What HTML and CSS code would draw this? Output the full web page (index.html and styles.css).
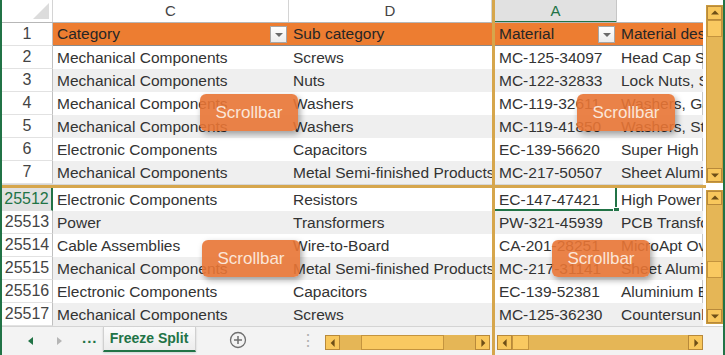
FILE: index.html
```html
<!DOCTYPE html>
<html lang="en">
<head>
    <meta charset="UTF-8">
    <title>Freeze Split</title>
    <link rel="stylesheet" href="styles.css">
</head>
<body>

    <div class="sheet">
        <!-- Top left pane: row headers, C and D -->
        <div class="pane pane-tl">
            <div class="colhead cols-l">
                <div class="corner"><span class="corner-tri"></span></div>
                <div class="hd">C</div>
                <div class="hd">D</div>
            </div>
            <div class="row cols-l">
                <div class="rn">1</div>
                <div class="cell th">Category<span class="filter"></span></div>
                <div class="cell th">Sub category</div>
            </div>
            <div class="row cols-l"><div class="rn">2</div><div class="cell">Mechanical Components</div><div class="cell">Screws</div></div>
            <div class="row cols-l alt"><div class="rn">3</div><div class="cell">Mechanical Components</div><div class="cell">Nuts</div></div>
            <div class="row cols-l"><div class="rn">4</div><div class="cell">Mechanical Components</div><div class="cell">Washers</div></div>
            <div class="row cols-l alt"><div class="rn">5</div><div class="cell">Mechanical Components</div><div class="cell">Washers</div></div>
            <div class="row cols-l"><div class="rn">6</div><div class="cell">Electronic Components</div><div class="cell">Capacitors</div></div>
            <div class="row cols-l alt"><div class="rn">7</div><div class="cell">Mechanical Components</div><div class="cell">Metal Semi-finished Products</div></div>
        </div>

        <!-- Top right pane: A and B -->
        <div class="pane pane-tr">
            <div class="colhead cols-r">
                <div class="hd hd-active">A</div>
                <div class="hd hd-blank"></div>
            </div>
            <div class="row cols-r edge">
                <div class="cell th">Material<span class="filter"></span></div>
                <div class="cell th">Material description</div>
            </div>
            <div class="row cols-r edge"><div class="cell">MC-125-34097</div><div class="cell">Head Cap Screws</div></div>
            <div class="row cols-r edge alt"><div class="cell">MC-122-32833</div><div class="cell">Lock Nuts, Steel</div></div>
            <div class="row cols-r edge"><div class="cell">MC-119-32611</div><div class="cell">Washers, Galvanized</div></div>
            <div class="row cols-r edge alt"><div class="cell">MC-119-41850</div><div class="cell">Washers, Steel</div></div>
            <div class="row cols-r edge"><div class="cell">EC-139-56620</div><div class="cell">Super High Capacity</div></div>
            <div class="row cols-r edge alt"><div class="cell">MC-217-50507</div><div class="cell">Sheet Aluminium</div></div>
        </div>

        <div class="vscroll vscroll-top">
            <div class="sb-btn"><span class="arr up"></span></div>
            <div class="sb-track"><div class="sb-thumb"></div></div>
            <div class="sb-btn"><span class="arr down"></span></div>
        </div>

        <div class="split-h"></div>
        <div class="split-v"></div>

        <!-- Bottom left pane -->
        <div class="pane pane-bl">
            <div class="row cols-l"><div class="rn rn-active">25512</div><div class="cell">Electronic Components</div><div class="cell">Resistors</div></div>
            <div class="row cols-l alt"><div class="rn">25513</div><div class="cell">Power</div><div class="cell">Transformers</div></div>
            <div class="row cols-l"><div class="rn">25514</div><div class="cell">Cable Assemblies</div><div class="cell">Wire-to-Board</div></div>
            <div class="row cols-l alt"><div class="rn">25515</div><div class="cell">Mechanical Components</div><div class="cell">Metal Semi-finished Products</div></div>
            <div class="row cols-l"><div class="rn">25516</div><div class="cell">Electronic Components</div><div class="cell">Capacitors</div></div>
            <div class="row cols-l alt"><div class="rn">25517</div><div class="cell">Mechanical Components</div><div class="cell">Screws</div></div>
        </div>

        <!-- Bottom right pane -->
        <div class="pane pane-br">
            <div class="row cols-r edge"><div class="cell cell-active">EC-147-47421</div><div class="cell">High Power Resistors</div></div>
            <div class="row cols-r edge alt"><div class="cell">PW-321-45939</div><div class="cell">PCB Transformers</div></div>
            <div class="row cols-r edge"><div class="cell">CA-201-28251</div><div class="cell">MicroApt Overmolded</div></div>
            <div class="row cols-r edge alt"><div class="cell">MC-217-31141</div><div class="cell">Sheet Aluminium</div></div>
            <div class="row cols-r edge"><div class="cell">EC-139-52381</div><div class="cell">Aluminium Electrolytic</div></div>
            <div class="row cols-r edge alt"><div class="cell">MC-125-36230</div><div class="cell">Countersunk Screws</div></div>
        </div>

        <div class="vscroll vscroll-bottom">
            <div class="sb-btn"><span class="arr up"></span></div>
            <div class="sb-track"><div class="sb-thumb"></div></div>
            <div class="sb-btn"><span class="arr down"></span></div>
        </div>

        <!-- Sheet tabs + horizontal scrollbars -->
        <div class="tabbar tabbar-l">
            <span class="nav nav-prev"></span>
            <span class="nav nav-next"></span>
            <span class="nav-more">...</span>
            <div class="tab">Freeze Split</div>
            <span class="add-sheet">
                <svg width="18" height="18" viewBox="0 0 18 18">
                    <circle cx="9" cy="9" r="7.5" fill="none" stroke="#6f6f6f" stroke-width="1.3"/>
                    <path d="M9 5v8M5 9h8" stroke="#6f6f6f" stroke-width="1.5"/>
                </svg>
            </span>
            <span class="grip">&#8942;</span>
            <div class="hscroll hscroll-l">
                <div class="sb-btn"><span class="arr left"></span></div>
                <div class="sb-track"><div class="sb-thumb"></div></div>
                <div class="sb-btn"><span class="arr right"></span></div>
            </div>
        </div>
        <div class="tabbar tabbar-r">
            <div class="hscroll hscroll-r">
                <div class="sb-btn"><span class="arr left"></span></div>
                <div class="sb-track"><div class="sb-thumb"></div></div>
                <div class="sb-btn"><span class="arr right"></span></div>
            </div>
        </div>
        <div class="tabbar tabbar-end"></div>
    </div>

    <!-- Callouts over the scrollbars -->
    <div class="callout callout-tl">Scrollbar</div>
    <div class="callout callout-tr">Scrollbar</div>
    <div class="callout callout-bl">Scrollbar</div>
    <div class="callout callout-br">Scrollbar</div>

</body>
</html>
```

FILE: styles.css
```css
/* Base */
body {
    margin: 0;
    width: 725px;
    height: 355px;
    overflow: hidden;
    position: relative;
    background: #ffffff;
    font-family: "Liberation Sans", Arial, sans-serif;
    color: #333333;
}

/* --- Sheet grid: panes, split bars, scrollbars --- */
.sheet {
    display: grid;
    grid-template-columns: 490px 3px 208px 3px 17px;
    grid-template-rows: 185px 3px 138px 29px;
    height: 355px;
    box-sizing: border-box;
    border-left: 2px solid #217346;
    border-right: 2px solid #217346;
}

.pane {
    overflow: hidden;
}
.pane-tl { grid-column: 1; grid-row: 1; border-bottom: 1px solid #d6d6d6; box-sizing: border-box; }
.pane-tr { grid-column: 3; grid-row: 1; border-bottom: 1px solid #d6d6d6; box-sizing: border-box; }
.pane-bl { grid-column: 1; grid-row: 3; }
.pane-br { grid-column: 3; grid-row: 3; }

.split-h {
    grid-column: 1 / 5;
    grid-row: 2;
    background: #d6a64c;
}
.split-v {
    grid-column: 2;
    grid-row: 1 / 5;
    background: #d6a64c;
}

/* Column layouts */
.cols-l {
    display: grid;
    grid-template-columns: 51px 236px 203px;
}
.cols-r {
    display: grid;
    grid-template-columns: 122px 86px;
}

/* Column letter header */
.colhead {
    height: 23px;
    box-sizing: border-box;
    border-bottom: 1px solid #b7b7b7;
    background: #ffffff;
}
.corner {
    position: relative;
    border-right: 1px solid #d4d4d4;
}
.corner-tri {
    position: absolute;
    right: 3px;
    bottom: 3px;
    width: 0;
    height: 0;
    border-left: 16px solid transparent;
    border-bottom: 16px solid #dcdcdc;
}
.hd {
    text-align: center;
    font-size: 15px;
    line-height: 22px;
    color: #444444;
    border-right: 1px solid #d4d4d4;
}
.hd-active {
    background: #e1e1e1;
    color: #217346;
    border-bottom: 2px solid #217346;
    border-right-color: #c6c6c6;
    line-height: 21px;
}
.hd-blank {
    border-right: none;
}

/* Data rows */
.row {
    height: 23px;
    box-sizing: border-box;
}
.edge {
    width: 208px;
    border-right: 1px solid #c6c6c6;
}
.rn {
    background: #ffffff;
    border-right: 1px solid #c0c0c0;
    border-bottom: 1px solid #e2e2e2;
    text-align: center;
    font-size: 16px;
    line-height: 22px;
    color: #444444;
}
.rn-active {
    background: #e1e1e1;
    color: #217346;
    border-right: 2px solid #217346;
}
.cell {
    position: relative;
    padding-left: 4px;
    font-size: 15.5px;
    line-height: 23px;
    white-space: nowrap;
    overflow: hidden;
    color: #333333;
}
.alt .cell {
    background: #efefef;
}
.th,
.alt .th {
    background: #ed7d31;
    color: #262626;
    border-top: 1px solid #b7b7b7;
    border-bottom: 1px solid #8a8a8a;
    line-height: 21px;
    margin-top: -1px;
}

.filter {
    position: absolute;
    right: 2px;
    top: 3px;
    width: 15px;
    height: 15px;
    background: linear-gradient(#ffffff, #ececec);
    border: 1px solid #a6a6a6;
}
.filter::after {
    content: "";
    position: absolute;
    left: 4px;
    top: 6px;
    border-left: 4px solid transparent;
    border-right: 4px solid transparent;
    border-top: 4px solid #6a6a6a;
}

/* Active cell A25512 */
.cell-active {
    overflow: visible;
    box-shadow: inset -2px -2px 0 #217346;
}
.cell-active::after {
    content: "";
    position: absolute;
    right: -3px;
    bottom: -3px;
    width: 5px;
    height: 5px;
    background: #217346;
    border: 1px solid #ffffff;
}

/* --- Scrollbars --- */
.vscroll {
    grid-column: 5;
    display: flex;
    flex-direction: column;
    background: #e5b656;
    border: 1px solid #c99a3f;
    box-sizing: border-box;
}
.vscroll-top { grid-row: 1; margin-top: 5px; height: 178px; }
.vscroll-bottom { grid-row: 3; margin-top: 2px; height: 134px; }

.sb-btn {
    flex: none;
    width: 15px;
    height: 13px;
    background: #f8c75c;
    border: 1px solid #b8893a;
    box-sizing: border-box;
    position: relative;
}
.vscroll .sb-btn { width: auto; height: 14px; }
.sb-track {
    flex: 1;
    position: relative;
}
.sb-thumb {
    background: #f9c961;
    border: 1px solid #c4943e;
    box-sizing: border-box;
}
.vscroll .sb-thumb { height: 17px; }
.vscroll-bottom .sb-thumb { margin-top: 56px; }

.arr {
    position: absolute;
    left: 50%;
    top: 50%;
    width: 0;
    height: 0;
}
.arr.up {
    transform: translate(-50%, -60%);
    border-left: 4px solid transparent;
    border-right: 4px solid transparent;
    border-bottom: 4px solid #6e4f17;
}
.arr.down {
    transform: translate(-50%, -40%);
    border-left: 4px solid transparent;
    border-right: 4px solid transparent;
    border-top: 4px solid #6e4f17;
}
.arr.left {
    transform: translate(-60%, -50%);
    border-top: 4px solid transparent;
    border-bottom: 4px solid transparent;
    border-right: 4px solid #6e4f17;
}
.arr.right {
    transform: translate(-40%, -50%);
    border-top: 4px solid transparent;
    border-bottom: 4px solid transparent;
    border-left: 4px solid #6e4f17;
}

.hscroll {
    display: flex;
    height: 15px;
    margin-top: 8px;
    background: #e5b656;
    box-sizing: border-box;
}
.hscroll .sb-btn { height: 15px; }
.hscroll .sb-thumb { height: 15px; }
.hscroll-l { width: 165px; margin-left: auto; margin-right: 2px; }
.hscroll-l .sb-thumb { width: 83px; margin-left: 21px; }
.hscroll-r { width: 206px; margin-left: 2px; }
.hscroll-r .sb-thumb { width: 17px; }

/* --- Sheet tab bar --- */
.tabbar {
    grid-row: 4;
    background: #f3f3f3;
    border-top: 1px solid #d4d4d4;
    box-sizing: border-box;
    display: flex;
    align-items: flex-start;
}
.tabbar-l { grid-column: 1; }
.tabbar-r { grid-column: 3; }
.tabbar-end { grid-column: 4 / 6; background: #f3f3f3; }

.nav {
    margin-top: 10px;
    width: 0;
    height: 0;
    border-top: 4px solid transparent;
    border-bottom: 4px solid transparent;
}
.nav-prev {
    margin-left: 26px;
    border-right: 5px solid #217346;
}
.nav-next {
    margin-left: 24px;
    border-left: 5px solid #b5b5b5;
}
.nav-more {
    margin-left: 20px;
    margin-top: 2px;
    font-size: 15px;
    font-weight: bold;
    color: #217346;
    letter-spacing: 1px;
}
.tab {
    margin-left: 5px;
    width: 93px;
    height: 25px;
    box-sizing: border-box;
    background: linear-gradient(#fbfbfb, #ececec);
    border: 1px solid #d0d0d0;
    border-top: none;
    border-bottom: 2px solid #217346;
    text-align: center;
    font-size: 14px;
    font-weight: bold;
    line-height: 23px;
    color: #217346;
    box-shadow: 0 1px 2px rgba(0, 0, 0, 0.15);
}
.add-sheet {
    margin-left: 33px;
    margin-top: 4px;
    height: 18px;
}
.grip {
    margin-left: 53px;
    margin-top: 4px;
    font-size: 16px;
    color: #b0b0b0;
}

/* --- Callouts --- */
.callout {
    position: absolute;
    width: 98px;
    height: 37px;
    border-radius: 6px;
    background: rgba(232, 116, 52, 0.9);
    box-shadow: 2px 3px 6px rgba(0, 0, 0, 0.35);
    color: #fbe6d8;
    font-size: 17px;
    line-height: 37px;
    text-align: center;
}
.callout-tl { left: 200px; top: 94px; }
.callout-tr { left: 577px; top: 94px; }
.callout-bl { left: 202px; top: 240px; }
.callout-br { left: 552px; top: 240px; }
```
